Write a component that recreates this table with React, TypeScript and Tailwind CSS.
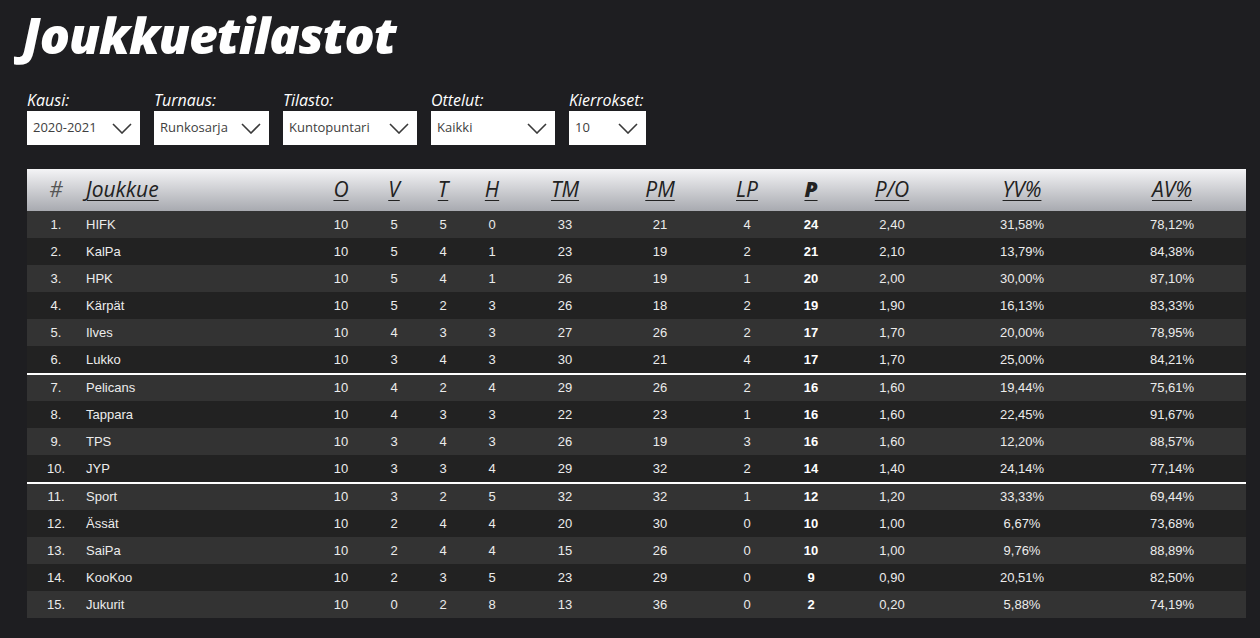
import React from 'react';

const filters = [
  { label: 'Kausi:', value: '2020-2021', width: 'w-[113px]' },
  { label: 'Turnaus:', value: 'Runkosarja', width: 'w-[115px]' },
  { label: 'Tilasto:', value: 'Kuntopuntari', width: 'w-[134px]' },
  { label: 'Ottelut:', value: 'Kaikki', width: 'w-[124px]' },
  { label: 'Kierrokset:', value: '10', width: 'w-[77px]' },
];

const columns = [
  { key: 'rank', title: '#', width: 58, underline: false },
  { key: 'team', title: 'Joukkue', width: 231, underline: true },
  { key: 'o', title: 'O', width: 50, underline: true },
  { key: 'v', title: 'V', width: 56, underline: true },
  { key: 't', title: 'T', width: 42, underline: true },
  { key: 'h', title: 'H', width: 56, underline: true },
  { key: 'tm', title: 'TM', width: 90, underline: true },
  { key: 'pm', title: 'PM', width: 100, underline: true },
  { key: 'lp', title: 'LP', width: 74, underline: true },
  { key: 'p', title: 'P', width: 54, underline: true },
  { key: 'po', title: 'P/O', width: 108, underline: true },
  { key: 'yv', title: 'YV%', width: 152, underline: true },
  { key: 'av', title: 'AV%', width: 148, underline: true },
];

// team, O, V, T, H, TM, PM, LP, P, P/O, YV%, AV%
const rows: (string | number)[][] = [
  ['HIFK', 10, 5, 5, 0, 33, 21, 4, 24, '2,40', '31,58%', '78,12%'],
  ['KalPa', 10, 5, 4, 1, 23, 19, 2, 21, '2,10', '13,79%', '84,38%'],
  ['HPK', 10, 5, 4, 1, 26, 19, 1, 20, '2,00', '30,00%', '87,10%'],
  ['Kärpät', 10, 5, 2, 3, 26, 18, 2, 19, '1,90', '16,13%', '83,33%'],
  ['Ilves', 10, 4, 3, 3, 27, 26, 2, 17, '1,70', '20,00%', '78,95%'],
  ['Lukko', 10, 3, 4, 3, 30, 21, 4, 17, '1,70', '25,00%', '84,21%'],
  ['Pelicans', 10, 4, 2, 4, 29, 26, 2, 16, '1,60', '19,44%', '75,61%'],
  ['Tappara', 10, 4, 3, 3, 22, 23, 1, 16, '1,60', '22,45%', '91,67%'],
  ['TPS', 10, 3, 4, 3, 26, 19, 3, 16, '1,60', '12,20%', '88,57%'],
  ['JYP', 10, 3, 3, 4, 29, 32, 2, 14, '1,40', '24,14%', '77,14%'],
  ['Sport', 10, 3, 2, 5, 32, 32, 1, 12, '1,20', '33,33%', '69,44%'],
  ['Ässät', 10, 2, 4, 4, 20, 30, 0, 10, '1,00', '6,67%', '73,68%'],
  ['SaiPa', 10, 2, 4, 4, 15, 26, 0, 10, '1,00', '9,76%', '88,89%'],
  ['KooKoo', 10, 2, 3, 5, 23, 29, 0, 9, '0,90', '20,51%', '82,50%'],
  ['Jukurit', 10, 0, 2, 8, 13, 36, 0, 2, '0,20', '5,88%', '74,19%'],
];

function Chevron() {
  return (
    <svg width="20" height="11" viewBox="0 0 20 11" fill="none" className="shrink-0">
      <path d="M1 1l9 9 9-9" stroke="#3a3a3a" strokeWidth="1.6" />
    </svg>
  );
}

export default function App() {
  return (
    <div className="min-h-screen bg-[#1e1e21] px-[27px] pt-[6px] pb-6 text-white [font-family:'Open_Sans',sans-serif]">
      {/* Title */}
      <h1 className="-ml-[5px] text-[50px] leading-[58px] font-extrabold italic tracking-[-1px] [font-family:'Open_Sans',sans-serif]">
        Joukkuetilastot
      </h1>

      {/* Filters */}
      <div className="mt-[26px] flex gap-[14px]">
        {filters.map((f) => (
          <div key={f.label} className="flex flex-col">
            <span className="text-[16px] leading-[20px] italic text-white">{f.label}</span>
            <div
              className={`${f.width} mt-[1px] flex h-[34px] items-center justify-between bg-white pl-[6px] pr-[8px]`}
            >
              <span className="text-[13px] text-[#404040]">{f.value}</span>
              <Chevron />
            </div>
          </div>
        ))}
      </div>

      {/* Table */}
      <table className="mt-[24px] w-[1219px] table-fixed border-separate border-spacing-0">
        <colgroup>
          {columns.map((c) => (
            <col key={c.key} style={{ width: c.width }} />
          ))}
        </colgroup>
        <thead>
          <tr className="h-[42px] bg-gradient-to-b from-[#f4f4f6] to-[#a8aab0]">
            {columns.map((c) => (
              <th
                key={c.key}
                className={`p-0 text-[21px] font-normal italic ${
                  c.key === 'team' ? 'pl-[1px] text-left' : 'text-center'
                } ${c.key === 'rank' ? 'text-[#555]' : 'text-[#222]'}`}
              >
                <span
                  className={`${c.underline ? 'underline decoration-1 underline-offset-[3px]' : ''} ${
                    c.key === 'p' ? 'font-extrabold' : ''
                  }`}
                >
                  {c.title}
                </span>
              </th>
            ))}
          </tr>
        </thead>
        <tbody className="text-[13px] text-[#ececec] [font-family:'Liberation_Sans',Arial,sans-serif]">
          {rows.map((r, i) => {
            const split = i === 6 || i === 10;
            const cell = `p-0 ${split ? 'border-t-2 border-white' : ''}`;
            return (
              <tr
                key={r[0] as string}
                className={`${split ? 'h-[28px]' : 'h-[27px]'} ${i % 2 === 0 ? 'bg-[#333333]' : 'bg-[#222222]'}`}
              >
                <td className={`${cell} text-center`}>{i + 1}.</td>
                <td className={`${cell} pl-[1px] text-left`}>{r[0]}</td>
                {r.slice(1).map((v, j) => (
                  <td key={j} className={`${cell} text-center ${j === 7 ? 'font-bold text-white' : ''}`}>
                    {v}
                  </td>
                ))}
              </tr>
            );
          })}
        </tbody>
      </table>
    </div>
  );
}
